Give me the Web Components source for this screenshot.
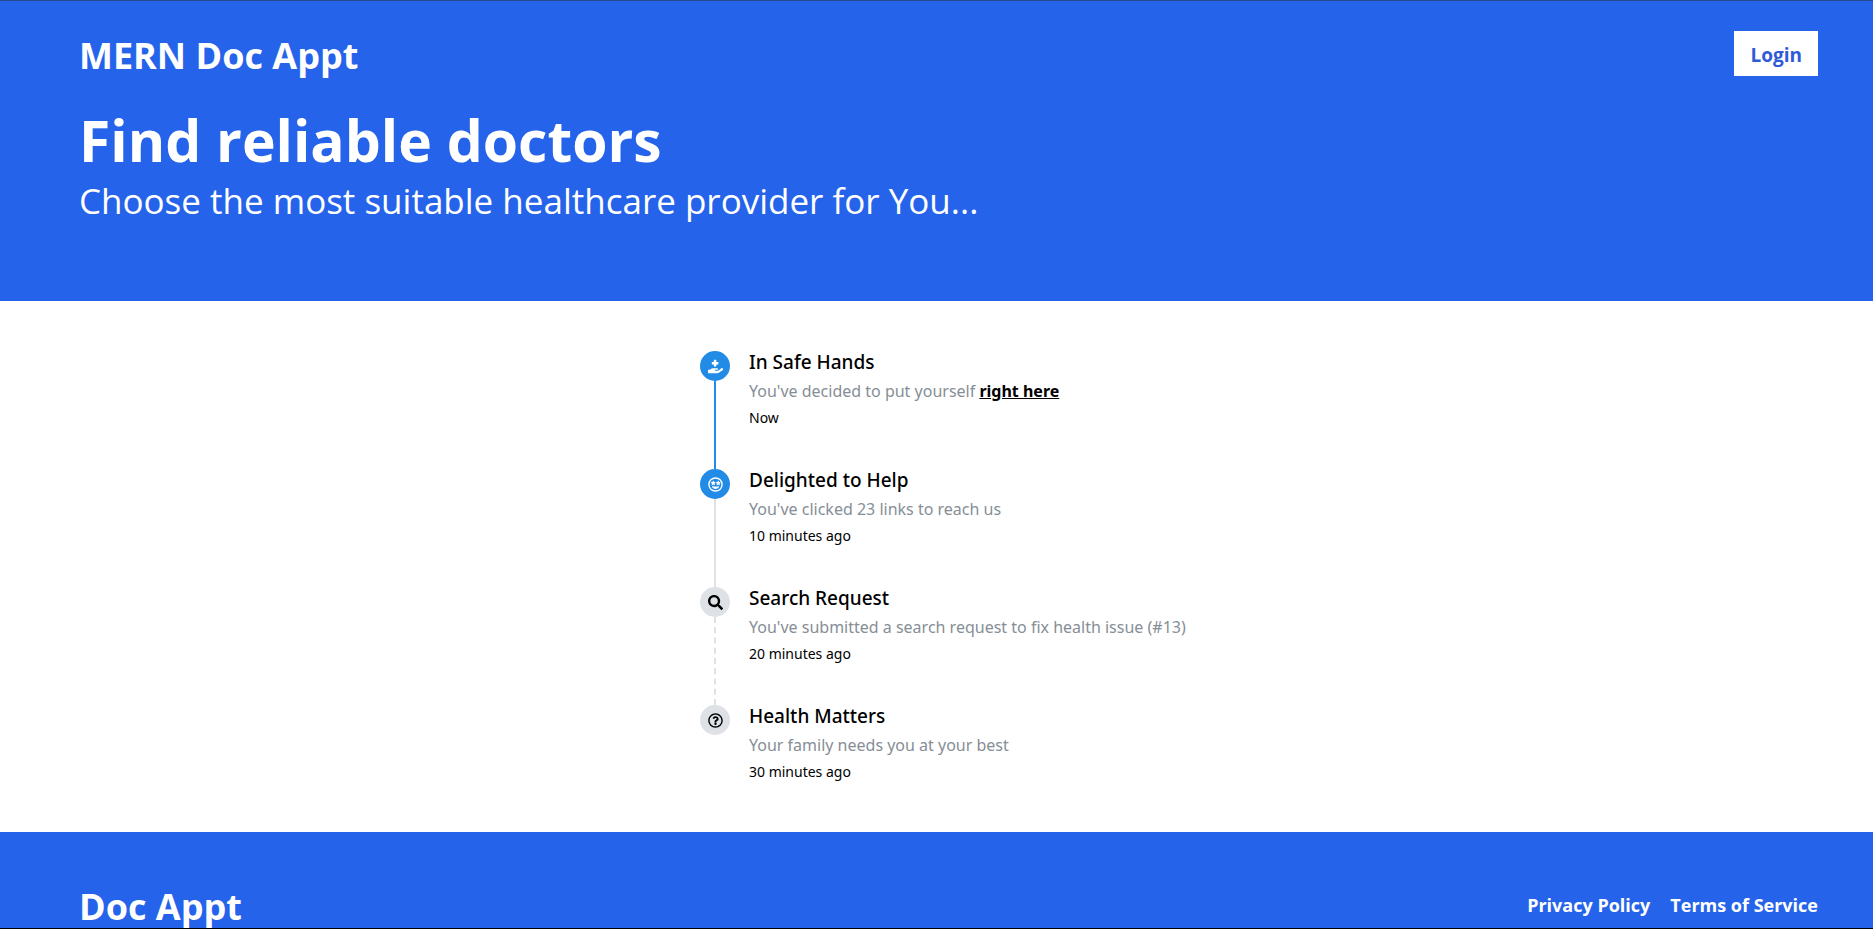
<!DOCTYPE html>
<html lang="en">
<head>
<meta charset="utf-8">
<title>MERN Doc Appt</title>
<style>
html, body { margin: 0; height: 100%; }
body { font-family: "Segoe UI", "Open Sans", "Noto Sans", sans-serif; color: #000; background: #fff; overflow: hidden; }
</style>
</head>
<body>
<doc-app></doc-app>

<template id="t-app">
<style>
:host { display: flex; flex-direction: column; height: 100vh; overflow: hidden; box-sizing: border-box; border-top: 1px solid #26498f; border-bottom: 1px solid #000; }
main { flex: none; display: flex; justify-content: center; padding: 50px 0 50px 24px; }
ol { list-style: none; margin: 0; padding: 0; width: 497px; }
a { color: #000; font-weight: 700; }
doc-header, doc-footer { flex: none; }
</style>
<doc-header></doc-header>
<main>
<ol>
<time-item icon="hand" state="done" line="active"><span slot="title">In Safe Hands</span>You've decided to put yourself <a href="#">right here</a><span slot="time">Now</span></time-item>
<time-item icon="smile" state="done" line="plain"><span slot="title">Delighted to Help</span>You've clicked 23 links to reach us<span slot="time">10 minutes ago</span></time-item>
<time-item icon="search" line="dashed"><span slot="title">Search Request</span>You've submitted a search request to fix health issue (#13)<span slot="time">20 minutes ago</span></time-item>
<time-item icon="question" line="none"><span slot="title">Health Matters</span>Your family needs you at your best<span slot="time">30 minutes ago</span></time-item>
</ol>
</main>
<doc-footer></doc-footer>
</template>

<template id="t-header">
<style>
:host { display: block; background: #2563eb; color: #fff; padding: 30px 55px 75px 79px; }
.bar { display: flex; justify-content: space-between; align-items: center; }
.brand { font-size: 36px; line-height: 45px; padding-top: 2px; font-weight: 700; color: inherit; text-decoration: none; }
button { font: 700 19px/25px "Segoe UI", "Open Sans", "Noto Sans", sans-serif; color: #2f5bd8; background: #fff; border: 0; border-radius: 0; padding: 12px 16px 8px; align-self: flex-start; }
h1 { margin: 30px 0 0; font-size: 57px; line-height: 64px; font-weight: 700; }
p { margin: 4px 0 0; font-size: 35px; line-height: 50px; }
</style>
<div class="bar"><a class="brand" href="#">MERN Doc Appt</a><button type="button">Login</button></div>
<h1>Find reliable doctors</h1>
<p>Choose the most suitable healthcare provider for You...</p>
</template>

<template id="t-footer">
<style>
:host { display: flex; justify-content: space-between; align-items: center; background: #2563eb; color: #fff; padding: 50px 55px 50px 79px; font-weight: 700; }
.brand { font-size: 36px; line-height: 50px; }
nav { display: flex; gap: 20px; padding-bottom: 4px; }
a { color: inherit; text-decoration: none; font-size: 18px; line-height: 28px; }
</style>
<span class="brand">Doc Appt</span>
<nav><a href="#">Privacy Policy</a><a href="#">Terms of Service</a></nav>
</template>

<template id="t-item">
<style>
:host { display: grid; grid-template-columns: 30px 1fr; column-gap: 19px; min-height: 118px; font-family: "Segoe UI", "Noto Sans", "Open Sans", sans-serif; }
:host([line="none"]) { min-height: 0; }
.rail { display: flex; flex-direction: column; align-items: center; }
.dot { flex: none; width: 30px; height: 30px; border-radius: 50%; background: #dee2e6; color: #000; display: grid; place-items: center; }
:host([state="done"]) .dot { background: #228be6; color: #fff; }
.line { flex: 1; border-left: 2px solid #dee2e6; }
:host([line="active"]) .line { border-color: #228be6; }
:host([line="dashed"]) .line { border-left-style: dashed; }
:host([line="none"]) .line { display: none; }
svg { width: 15px; height: 15px; fill: currentColor; display: block; }
.title { font-size: 19px; line-height: 22px; font-weight: 500; }
.text { font-size: 16px; line-height: 26px; margin-top: 5px; color: #868e96; }
.time { font-size: 14px; line-height: 20px; margin-top: 4px; }
</style>
<div class="rail"><div class="dot"></div><div class="line"></div></div>
<div><div class="title"><slot name="title"></slot></div><div class="text"><slot></slot></div><div class="time"><slot name="time"></slot></div></div>
</template>

<script>
const ICONS = {
  hand: ['0 0 576 512', 'M159.88,175.82h64v64a16,16,0,0,0,16,16h64a16,16,0,0,0,16-16v-64h64a16,16,0,0,0,16-16v-64a16,16,0,0,0-16-16h-64v-64a16,16,0,0,0-16-16h-64a16,16,0,0,0-16,16v64h-64a16,16,0,0,0-16,16v64A16,16,0,0,0,159.88,175.82ZM568.07,336.13a39.91,39.91,0,0,0-55.93-8.47L392.47,415.84H271.86a16,16,0,0,1,0-32H350.1c16,0,30.75-10.87,33.37-26.61a32.06,32.06,0,0,0-31.62-37.38h-160a117.7,117.7,0,0,0-74.12,26.25l-46.5,37.74H15.87a16.11,16.11,0,0,0-16,16v96a16.11,16.11,0,0,0,16,16h347a104.8,104.8,0,0,0,62.7-20.88l134.1-94.8A40,40,0,0,0,568.07,336.13Z'],
  smile: ['0 0 496 512', 'M248 8a248 248 0 1 0 0 496a248 248 0 1 0 0-496zm0 448a200 200 0 1 1 0-400a200 200 0 1 1 0 400zM353 312c-26 8-64 13-105 13s-79-5-105-13c-10-3-20 6-18 16 8 47 72 80 123 80s115-33 123-80c2-10-8-19-18-16zM163 129l-20 41-45 7c-8 1-11 11-5 16l32 32-8 45c-1 8 7 14 14 10l40-21 40 21c7 4 15-2 14-10l-8-45 33-32c6-5 3-15-5-16l-46-7-20-41c-3-7-13-7-16 0zm170 0l-20 41-46 7c-8 1-11 11-5 16l33 32-8 45c-1 8 7 14 14 10l40-21 40 21c7 4 15-2 14-10l-8-45 32-32c6-5 3-15-5-16l-45-7-20-41c-3-7-13-7-16 0z'],
  search: ['0 0 512 512', 'M505 442.7L405.3 343c-4.5-4.5-10.6-7-17-7H372c27.6-35.3 44-79.7 44-128C416 93.1 322.9 0 208 0S0 93.1 0 208s93.1 208 208 208c48.3 0 92.7-16.4 128-44v16.3c0 6.4 2.5 12.5 7 17l99.7 99.7c9.4 9.4 24.6 9.4 33.9 0l28.3-28.3c9.4-9.4 9.4-24.6.1-34zM208 336c-70.7 0-128-57.2-128-128 0-70.7 57.2-128 128-128 70.7 0 128 57.2 128 128 0 70.7-57.2 128-128 128z'],
  question: ['0 0 512 512', 'M256 8C119.043 8 8 119.083 8 256c0 136.997 111.043 248 248 248s248-111.003 248-248C504 119.083 392.957 8 256 8zm0 448c-110.532 0-200-89.431-200-200 0-110.495 89.472-200 200-200 110.491 0 200 89.471 200 200 0 110.53-89.431 200-200 200zm107.244-255.2c0 67.052-72.421 68.084-72.421 92.863V300c0 6.627-5.373 12-12 12h-45.647c-6.627 0-12-5.373-12-12v-8.659c0-35.745 27.1-50.034 47.579-61.516 17.561-9.845 28.324-16.541 28.324-29.579 0-17.246-21.999-28.693-39.784-28.693-23.189 0-33.894 10.977-48.942 29.969-4.057 5.12-11.46 6.071-16.666 2.124l-27.824-21.098c-5.107-3.872-6.251-11.066-2.644-16.363C184.846 131.491 214.94 112 261.794 112c49.071 0 101.45 38.304 101.45 88.8zM298 368c0 23.159-18.841 42-42 42s-42-18.841-42-42 18.841-42 42-42 42 18.841 42 42z']
};
class Base extends HTMLElement {
  constructor() {
    super();
    this.attachShadow({ mode: 'open' }).append(document.getElementById(this.constructor.tpl).content.cloneNode(true));
  }
}
class DocHeader extends Base { static tpl = 't-header'; }
class DocFooter extends Base { static tpl = 't-footer'; }
class TimeItem extends Base {
  static tpl = 't-item';
  connectedCallback() {
    this.setAttribute('role', 'listitem');
    const [box, d] = ICONS[this.getAttribute('icon')];
    this.shadowRoot.querySelector('.dot').innerHTML = `<svg viewBox="${box}" aria-hidden="true"><path d="${d}"/></svg>`;
  }
}
class DocApp extends Base { static tpl = 't-app'; }
customElements.define('doc-header', DocHeader);
customElements.define('doc-footer', DocFooter);
customElements.define('time-item', TimeItem);
customElements.define('doc-app', DocApp);
</script>
</body>
</html>
